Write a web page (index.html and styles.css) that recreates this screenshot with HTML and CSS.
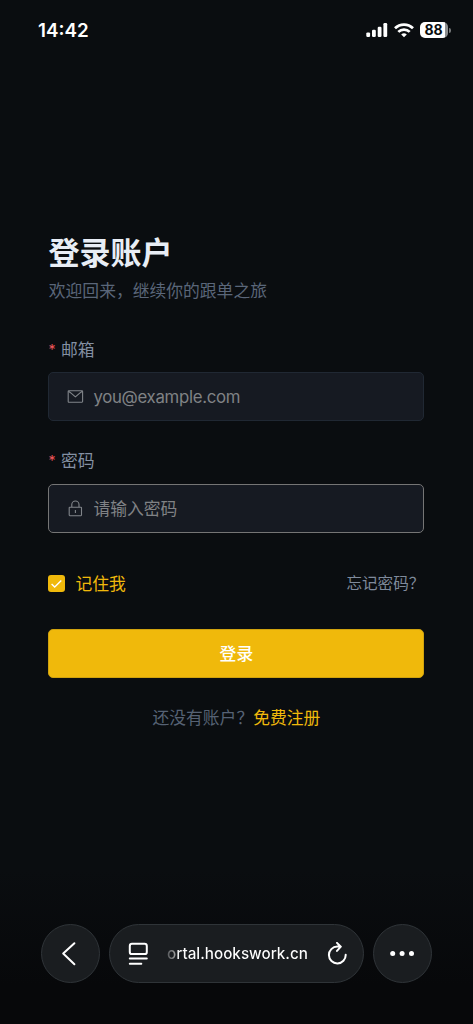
FILE: index.html
```html
<!DOCTYPE html>
<html lang="zh-CN">
<head>
<meta charset="utf-8">
<meta name="viewport" content="width=device-width, initial-scale=1">
<title>登录账户</title>
<link rel="stylesheet" href="styles.css">
</head>
<body>
<div class="screen">
  <header class="status">
    <span class="time">14:42</span>
    <div class="status-icons">
      <svg class="signal" width="22" height="14" viewBox="0 0 22 14" fill="#fff"><rect x="0.3" y="9.4" width="3.8" height="4.6" rx="1.2"/><rect x="6" y="6.8" width="3.8" height="7.2" rx="1.2"/><rect x="11.7" y="3.7" width="3.8" height="10.3" rx="1.2"/><rect x="17.4" y="0" width="3.8" height="14" rx="1.2"/></svg>
      <svg class="wifi" width="20" height="15" viewBox="0 0 20 15" fill="none" stroke="#fff" stroke-width="2.7"><path d="M1 5.3a12.7 12.7 0 0 1 18 0"/><path d="M4.3 8.9a8.1 8.1 0 0 1 11.4 0"/><path d="M10 14.3 7.2 11.5a4 4 0 0 1 5.6 0Z" fill="#fff" stroke="none"/></svg>
      <div class="battery"><span>88</span></div>
      <i class="battery-tip"></i>
    </div>
  </header>

  <main class="login">
    <h1>登录账户</h1>
    <p class="subtitle">欢迎回来，继续你的跟单之旅</p>

    <label class="label label-email"><span class="star">*</span>邮箱</label>
    <div class="field">
      <svg width="17" height="17" viewBox="0 0 17 17" fill="none" stroke="#81858a" stroke-width="1.1" stroke-linejoin="round"><rect x="1.2" y="2.8" width="14.4" height="11.4" rx=".6"/><path d="m1.5 3.2 2 1.5 4.9 4.2 4.9-4.2 2-1.5"/></svg>
      <span class="placeholder latin">you@example.com</span>
    </div>

    <label class="label label-password"><span class="star">*</span>密码</label>
    <div class="field field-active">
      <svg width="17" height="17" viewBox="0 0 17 17" fill="none" stroke="#81858a" stroke-width="1.1"><rect x="2.2" y="7.2" width="12.3" height="8.5" rx=".6"/><path d="M4.8 7V4.6a3.6 3.6 0 0 1 7.2 0V7M8.4 10v3"/></svg>
      <span class="placeholder">请输入密码</span>
    </div>

    <div class="options">
      <span class="remember">
        <span class="checkbox"><svg width="17" height="17" viewBox="0 0 17 17" fill="none" stroke="#fff" stroke-width="1.4"><path d="m3.6 9 3.1 3.1 6.6-6.6"/></svg></span>
        记住我
      </span>
      <a class="forgot">忘记密码？</a>
    </div>
    <button class="submit">登录</button>
    <p class="signup">还没有账户？<a>免费注册</a></p>
  </main>

  <nav class="browser">
    <div class="glass round">
      <svg width="58" height="58" viewBox="0 0 58 58" fill="none" stroke="#fff" stroke-width="2" stroke-linecap="round" stroke-linejoin="round"><path d="M32.4 18.2 21.2 28.6 32.4 39.2"/></svg>
    </div>
    <div class="glass address">
      <svg class="reader" width="20" height="24" viewBox="0 0 20 24" fill="none" stroke="#fff" stroke-width="2" stroke-linecap="round"><rect x="1.8" y="1.8" width="17" height="10.3" rx="2.2"/><path d="M1.8 16.6h17M1.8 21.7h11.5"/></svg>
      <span class="url">ortal.hookswork.cn</span>
      <svg class="reload" width="20" height="24" viewBox="0 0 20 24" fill="none" stroke="#fff" stroke-width="2" stroke-linecap="round" stroke-linejoin="round"><path d="M18.7 12.7A8.4 8.4 0 1 1 10.3 4.6h3.2M10 .9l3.8 3.8-3.8 4.2"/></svg>
    </div>
    <div class="glass round">
      <svg width="58" height="58" viewBox="0 0 58 58" fill="#fff"><circle cx="18.7" cy="28.5" r="2.5"/><circle cx="28.1" cy="28.5" r="2.5"/><circle cx="37.5" cy="28.5" r="2.5"/></svg>
    </div>
  </nav>
</div>
</body>
</html>
```

FILE: styles.css
```css
* { box-sizing: border-box; }
body { margin: 0; background: #0a0d10; }
h1, p { margin: 0; }
svg { display: block; flex: none; }

.screen {
  width: 473px;
  height: 1024px;
  display: flex;
  flex-direction: column;
  overflow: hidden;
  background: linear-gradient(#0a0d10 0, #0a0d10 870px, #07080a 985px, #07080a 100%);
  font-family: Inter, "Noto Sans CJK SC", sans-serif;
  font-size: 16.8px;
  color: #fff;
}

.status {
  height: 60px;
  padding: 0 22px 0 38px;
  display: flex;
  align-items: center;
  justify-content: space-between;
}
.time { padding-top: 2px; font-size: 18.8px; font-weight: 600; line-height: 22px; }
.status-icons { display: flex; align-items: center; }
.wifi { margin-left: 6px; }
.battery {
  width: 28px;
  height: 16px;
  margin-left: 6px;
  border-radius: 5px;
  background: linear-gradient(90deg, #fff 25px, #8c8e90 25px);
  color: #0a0d10;
  font-size: 14px;
  font-weight: 700;
  line-height: 16px;
  text-align: center;
}
.battery span { display: block; width: 27px; }
.battery-tip { width: 2px; height: 5px; margin-left: 1px; border-radius: 0 2px 2px 0; background: #77797b; }

.login { padding: 170px 48.6px 0 48.4px; display: flex; flex-direction: column; }
h1 { height: 46px; font-size: 31px; line-height: 46px; font-weight: 700; color: #e8edf5; }
.subtitle { height: 28px; margin-top: 1px; padding-left: .4px; line-height: 28px; color: #5a6679; }

.label { height: 24px; line-height: 24px; display: flex; color: #8490a3; }
.label-email { margin-top: 33px; }
.label-password { margin-top: 28px; }
.star { width: 12.5px; font-size: 14px; color: #f0575b; }

.field {
  height: 49px;
  margin-top: 10px;
  padding-left: 18px;
  display: flex;
  align-items: center;
  gap: 9px;
  border: 1px solid #202833;
  border-radius: 5px;
  background: #161a22;
}
.label-password + .field { margin-top: 11px; }
.field-active { border-color: #757575; }
.placeholder { color: #808285; line-height: 24px; }
.latin { font-size: 16.8px; letter-spacing: -.3px; }

.options { height: 26px; margin-top: 37px; display: flex; align-items: center; justify-content: space-between; }
.remember { display: flex; align-items: center; gap: 10px; color: #f0b90b; }
.checkbox { width: 17px; height: 17px; border-radius: 3px; background: #f0b90b; }
.forgot { font-size: 15.6px; line-height: 22px; padding-top: 1px; color: #7f8a9b; }

.submit {
  height: 49px;
  margin-top: 33px;
  padding: 0;
  border: 1px solid #d0a20e;
  border-radius: 5px;
  background: #f0b90b;
  color: #fff;
  font: 500 16.8px/46px Inter, "Noto Sans CJK SC", sans-serif;
}
.signup { margin-top: 28px; line-height: 24px; text-align: center; color: #566274; }
.signup a { color: #f0b90b; }

.browser { margin: auto 41px 41px; display: flex; gap: 9px; }
.glass { height: 59px; border: 1px solid #2f3438; border-radius: 30px; background: #1a1d20; }
.round { width: 59px; flex: none; }
.address { flex: 1; padding: 0 16px 0 18px; display: flex; align-items: center; justify-content: space-between; }
.url {
  font-size: 15.25px;
  font-weight: 500;
  line-height: 24px;
  background: linear-gradient(90deg, #55585b 0, #999 8px, #fff 12px);
  background-clip: text;
  -webkit-background-clip: text;
  color: transparent;
}
```
